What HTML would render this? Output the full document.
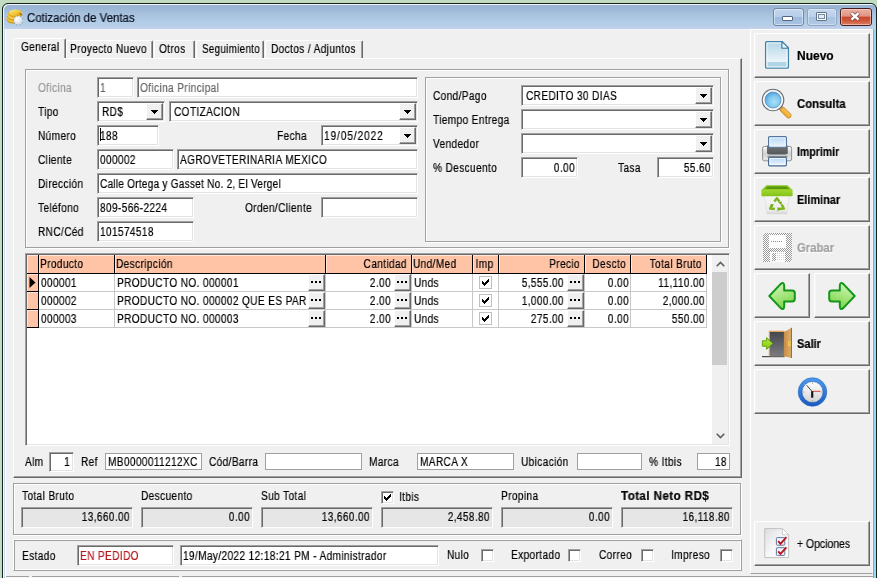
<!DOCTYPE html><html><head><meta charset="utf-8"><title>Cotización de Ventas</title><style>
html,body{margin:0;padding:0;}
body{width:877px;height:578px;overflow:hidden;background:#c1dcc1;position:relative;
 font-family:"Liberation Sans",sans-serif;font-size:12px;color:#000;}
div,span,i,b{box-sizing:border-box;}
.t,.s,.f>span,.bt{will-change:transform;-webkit-text-stroke:0.2px currentColor;}
.t,.s,.f>span{letter-spacing:.45px;}
.abs,.t,.f,.fr,.btn,.pn,.hd,.c,.eb,.ck,.gl{position:absolute;}
#win{position:absolute;left:2px;top:3px;width:875px;height:600px;border:1px solid #18211b;border-radius:6px 6px 0 0;
 background:linear-gradient(#97b3d2 1px,#9fbad8 6px,#a9c3df 11px,#afcae5 16px,#b2cee8 20px,#bccfe9 23px,#c3d3eb 25px,#c3d3eb 100%);
 box-shadow:inset 1px 1px 0 #f4f8fc;}
#client{position:absolute;left:5px;top:29px;width:868px;height:560px;background:#f0f0f0;}
.t{white-space:nowrap;line-height:13px;height:13px;transform:scaleX(.84);transform-origin:0 0;}
.dis{color:#989898;}
.dis2{color:#666;}
.f{background:#fff;border:1px solid;border-color:#a0a0a0 #fff #fff #a0a0a0;
 box-shadow:inset 1px 1px 0 #696969, inset -1px -1px 0 #e3e3e3;overflow:hidden;}
.f>span{position:absolute;left:2px;right:2px;top:4px;line-height:13px;height:13px;white-space:nowrap;display:block;transform:scaleX(.84);transform-origin:0 0;}
.f>span.r{transform-origin:100% 0;}
.s{display:block;transform:scaleX(.84);transform-origin:0 0;}
.s.ar{transform-origin:100% 0;text-align:right;}
.s.ac{transform-origin:50% 0;text-align:center;}
.f.g{background:#e6e6e6;}
.f.flat{border:1px solid #a0a0a0;box-shadow:none;}
.f.flat>span{top:2px;left:2px;right:2px;}
.f.g>span{top:3px;}
.cb{position:absolute;right:1px;top:1px;width:17px;background:#f0f0f0;border:1px solid;border-color:#fff #696969 #696969 #fff;
 box-shadow:inset -1px -1px 0 #a0a0a0, inset 1px 1px 0 #f0f0f0;display:block;}
.cb>svg{left:4px;top:6px;}
.fr{border:1px solid #a0a0a0;box-shadow:1px 1px 0 #fff, inset 1px 1px 0 #fff;}
.frb{position:absolute;border:1px solid;border-color:#fff #a0a0a0 #a0a0a0 #fff;box-shadow:inset 1px 1px 0 #a0a0a0, inset -1px -1px 0 #fff;}
.btn{background:#f0f0f0;border:1px solid;border-color:#fff #696969 #696969 #fff;
 box-shadow:inset -1px -1px 0 #a0a0a0, inset 1px 1px 0 #f4f4f4;}
.bt{position:absolute;font-weight:bold;font-size:12px;line-height:13px;height:13px;white-space:nowrap;transform-origin:0 0;}
.hd{background:#ffc3a5;border-top:1px solid #ffe6d9;border-left:1px solid #ffe6d9;line-height:13px;padding:2px 4px 0 0;white-space:nowrap;overflow:hidden;}
.c{background:#fff;line-height:13px;padding:3px 1px 0 2px;white-space:nowrap;overflow:hidden;}
.eb{background:#f0f0f0;border:1px solid;border-color:#fff #696969 #696969 #fff;box-shadow:inset -1px -1px 0 #a0a0a0;}
.eb:before{content:"";position:absolute;left:2px;top:6px;width:2px;height:2px;background:#000;box-shadow:4px 0 0 #000,8px 0 0 #000;}
.ck{width:13px;height:13px;background:#fff;border:1px solid #c0c0c0;}
.ck3{width:13px;height:13px;background:#fff;border:1px solid;border-color:#a0a0a0 #fff #fff #a0a0a0;box-shadow:inset 1px 1px 0 #696969, inset -1px -1px 0 #e3e3e3;position:absolute;}
.gl{background:#c0c0c0;}
svg{position:absolute;overflow:visible;}
</style></head><body>
<div id="win"></div>
<svg style="left:6px;top:9px" width="17" height="17" viewBox="0 0 17 17">
<defs><linearGradient id="gold" x1="0" y1="0" x2="1" y2="1"><stop offset="0" stop-color="#fbeb9a"/><stop offset="0.5" stop-color="#f2c83c"/><stop offset="1" stop-color="#d59a1a"/></linearGradient>
<radialGradient id="silv" cx="0.4" cy="0.35" r="0.75"><stop offset="0" stop-color="#ffffff"/><stop offset="1" stop-color="#cdd3d8"/></radialGradient></defs>
<ellipse cx="7.600" cy="10.600" rx="7" ry="4" fill="#cf961a"/>
<ellipse cx="7.800" cy="9.300" rx="7.200" ry="4" fill="#f0c23a"/>
<ellipse cx="8.300" cy="7.600" rx="7.300" ry="4" fill="#d9a224"/>
<ellipse cx="8.700" cy="6.300" rx="7.300" ry="4" fill="#f3cb48"/>
<ellipse cx="9.300" cy="4.800" rx="7" ry="3.800" fill="#dca726"/>
<ellipse cx="9.600" cy="3.800" rx="6.600" ry="3.400" fill="url(#gold)"/>
<path d="M13.500 4.600 Q15.800 5.200 16 6.400" stroke="#6b4a12" stroke-width="0.900" fill="none"/>
<circle cx="12.200" cy="11.400" r="4.500" fill="url(#silv)"/>
<circle cx="12.200" cy="11.400" r="4.600" fill="none" stroke="#6d7c90" stroke-width="0.900" stroke-dasharray="0.900 2.100" stroke-dashoffset="1"/>
</svg>
<div class="t" style="left:27px;top:11px;font-size:12px;line-height:15px;height:15px;color:#0a0f1e;transform:scaleX(.955);letter-spacing:0;">Cotización de Ventas</div>
<div class="abs" style="left:773px;top:8px;width:31px;height:18px;border:1px solid #6f88a8;border-radius:3px;background:linear-gradient(#c3d6ec 0,#b7cde8 48%,#9db9db 52%,#aac4e2 100%);box-shadow:inset 0 0 0 1px rgba(255,255,255,.45);">
<div class="abs" style="left:8px;top:7px;width:11px;height:5px;background:#fff;border:1px solid #55677f;border-radius:1px;"></div></div>
<div class="abs" style="left:807px;top:8px;width:30px;height:18px;border:1px solid #8fa6c3;border-radius:3px;background:linear-gradient(#c6d8ed 0,#bbd0e9 48%,#a9c2e0 52%,#b3cae5 100%);box-shadow:inset 0 0 0 1px rgba(255,255,255,.35);">
<div class="abs" style="left:8px;top:3px;width:11px;height:9px;background:#fbfcfe;border:1px solid #61728b;border-radius:1px;"><div class="abs" style="left:1px;top:1px;width:7px;height:5px;border:1px solid #7889a2;background:#e6ecf5"></div></div></div>
<div class="abs" style="left:840px;top:8px;width:32px;height:18px;border:1px solid #4b1f22;border-radius:3px;background:linear-gradient(#eab1a3 0,#e09584 45%,#c8472c 50%,#cf5a3d 75%,#dc8068 100%);box-shadow:inset 0 0 0 1px rgba(255,220,210,.55);">
<svg style="left:8px;top:3px" width="13" height="10" viewBox="0 0 13 10"><path d="M2.300 1 L9.700 7.800 M9.700 1 L2.300 7.800" stroke="#7a4a48" stroke-width="3.800" stroke-linecap="butt" fill="none"/><path d="M2.500 1.200 L9.500 7.600 M9.500 1.200 L2.500 7.600" stroke="#fff" stroke-width="2.500" stroke-linecap="butt" fill="none"/></svg></div>
<div class="abs" style="left:4px;top:29px;width:1px;height:549px;background:#c6dcf0"></div>
<div class="abs" style="left:873px;top:29px;width:1px;height:549px;background:#8aa7b8"></div>
<div class="abs" style="left:874px;top:29px;width:2px;height:549px;background:#97daf5"></div>
<div id="client"></div>
<div class="abs" style="left:872px;top:29px;width:1px;height:549px;background:#f7f5f5"></div>
<div class="abs" style="left:5px;top:29px;width:868px;height:1px;background:#f1f5fb"></div>
<div class="abs" style="left:5px;top:29px;width:1px;height:549px;background:#fff"></div>
<div class="abs" style="left:13px;top:58px;width:729px;height:420px;border:1px solid;border-color:#fff #696969 #696969 #fff;box-shadow:inset -1px -1px 0 #a0a0a0;"></div>
<div class="abs" style="left:66px;top:40px;width:87px;height:18px;border:1px solid;border-color:#fff #696969 transparent #fff;border-bottom:none;box-shadow:inset -1px 0 0 #a0a0a0;border-radius:2px 2px 0 0;"></div>
<div class="t " style="left:70px;top:43px;">Proyecto Nuevo</div>
<div class="abs" style="left:154px;top:40px;width:41px;height:18px;border:1px solid;border-color:#fff #696969 transparent #fff;border-bottom:none;box-shadow:inset -1px 0 0 #a0a0a0;border-radius:2px 2px 0 0;"></div>
<div class="t " style="left:159px;top:43px;">Otros</div>
<div class="abs" style="left:196px;top:40px;width:68px;height:18px;border:1px solid;border-color:#fff #696969 transparent #fff;border-bottom:none;box-shadow:inset -1px 0 0 #a0a0a0;border-radius:2px 2px 0 0;"></div>
<div class="t " style="left:202px;top:43px;transform:scaleX(.81);">Seguimiento</div>
<div class="abs" style="left:265px;top:40px;width:98px;height:18px;border:1px solid;border-color:#fff #696969 transparent #fff;border-bottom:none;box-shadow:inset -1px 0 0 #a0a0a0;border-radius:2px 2px 0 0;"></div>
<div class="t " style="left:271px;top:43px;">Doctos / Adjuntos</div>
<div class="abs" style="left:13px;top:38px;width:53px;height:20px;background:#f0f0f0;border:1px solid;border-color:#fff #696969 transparent #fff;border-bottom:none;box-shadow:inset -1px 0 0 #a0a0a0;border-radius:2px 2px 0 0;"></div>
<div class="abs" style="left:14px;top:58px;width:50px;height:1px;background:#f0f0f0;"></div>
<div class="t " style="left:21px;top:41px;">General</div>
<div class="fr" style="left:25px;top:69px;width:704px;height:179px;"></div>
<div class="fr" style="left:425px;top:77px;width:296px;height:165px;"></div>
<div class="t dis" style="left:38px;top:82px;">Oficina</div>
<div class="t " style="left:38px;top:106px;">Tipo</div>
<div class="t " style="left:38px;top:130px;">Número</div>
<div class="t " style="left:38px;top:154px;">Cliente</div>
<div class="t " style="left:38px;top:178px;">Dirección</div>
<div class="t " style="left:38px;top:202px;">Teléfono</div>
<div class="t " style="left:38px;top:226px;">RNC/Céd</div>
<div class="t " style="left:277px;top:130px;">Fecha</div>
<div class="t " style="left:245px;top:202px;">Orden/Cliente</div>
<div class="f dis2" style="left:97px;top:77px;width:37px;height:21px;"><span class="" style="text-align:left;">1</span></div>
<div class="f dis2" style="left:137px;top:77px;width:281px;height:21px;"><span class="" style="text-align:left;">Oficina Principal</span></div>
<div class="f" style="left:97px;top:101px;width:68px;height:21px;"><span style="left:4px;">RD$</span><i class="cb" style="height:17px"><svg width="7" height="4" viewBox="0 0 7 4" shape-rendering="crispEdges"><path d="M0 0h7v1h-1v1h-1v1h-1v1h-1v-1h-1v-1h-1v-1h-1z" fill="#000"/></svg></i></div>
<div class="f" style="left:169px;top:101px;width:249px;height:21px;"><span style="left:4px;">COTIZACION</span><i class="cb" style="height:17px"><svg width="7" height="4" viewBox="0 0 7 4" shape-rendering="crispEdges"><path d="M0 0h7v1h-1v1h-1v1h-1v1h-1v-1h-1v-1h-1v-1h-1z" fill="#000"/></svg></i></div>
<div class="f " style="left:97px;top:125px;width:62px;height:21px;"><span class="" style="text-align:left;">188</span></div>
<div class="abs" style="left:100px;top:128px;width:1px;height:13px;background:#000"></div>
<div class="f" style="left:321px;top:125px;width:97px;height:21px;"><span style="left:4px;left:2px;letter-spacing:1.1px;">19/05/2022</span><i class="cb" style="height:17px"><svg width="7" height="4" viewBox="0 0 7 4" shape-rendering="crispEdges"><path d="M0 0h7v1h-1v1h-1v1h-1v1h-1v-1h-1v-1h-1v-1h-1z" fill="#000"/></svg></i></div>
<div class="f " style="left:97px;top:149px;width:77px;height:21px;"><span class="" style="text-align:left;">000002</span></div>
<div class="f " style="left:177px;top:149px;width:241px;height:21px;"><span class="" style="text-align:left;">AGROVETERINARIA MEXICO</span></div>
<div class="f " style="left:97px;top:173px;width:321px;height:21px;"><span class="" style="text-align:left;letter-spacing:.28px;">Calle Ortega y Gasset No. 2, El Vergel</span></div>
<div class="f " style="left:97px;top:197px;width:97px;height:21px;"><span class="" style="text-align:left;">809-566-2224</span></div>
<div class="f " style="left:321px;top:197px;width:97px;height:21px;"><span class="" style="text-align:left;"></span></div>
<div class="f " style="left:97px;top:221px;width:97px;height:21px;"><span class="" style="text-align:left;">101574518</span></div>
<div class="t " style="left:433px;top:90px;">Cond/Pago</div>
<div class="t " style="left:433px;top:114px;">Tiempo Entrega</div>
<div class="t " style="left:433px;top:138px;">Vendedor</div>
<div class="t " style="left:433px;top:162px;">% Descuento</div>
<div class="t " style="left:618px;top:162px;">Tasa</div>
<div class="f" style="left:521px;top:85px;width:193px;height:21px;"><span style="left:4px;">CREDITO 30 DIAS</span><i class="cb" style="height:17px"><svg width="7" height="4" viewBox="0 0 7 4" shape-rendering="crispEdges"><path d="M0 0h7v1h-1v1h-1v1h-1v1h-1v-1h-1v-1h-1v-1h-1z" fill="#000"/></svg></i></div>
<div class="f" style="left:521px;top:109px;width:193px;height:21px;"><span style="left:4px;"></span><i class="cb" style="height:17px"><svg width="7" height="4" viewBox="0 0 7 4" shape-rendering="crispEdges"><path d="M0 0h7v1h-1v1h-1v1h-1v1h-1v-1h-1v-1h-1v-1h-1z" fill="#000"/></svg></i></div>
<div class="f" style="left:521px;top:133px;width:193px;height:21px;"><span style="left:4px;"></span><i class="cb" style="height:17px"><svg width="7" height="4" viewBox="0 0 7 4" shape-rendering="crispEdges"><path d="M0 0h7v1h-1v1h-1v1h-1v1h-1v-1h-1v-1h-1v-1h-1z" fill="#000"/></svg></i></div>
<div class="f " style="left:521px;top:157px;width:57px;height:21px;"><span class="r" style="text-align:right;">0.00</span></div>
<div class="f " style="left:657px;top:157px;width:57px;height:21px;"><span class="r" style="text-align:right;">55.60</span></div>
<div class="abs" style="left:25px;top:253px;width:705px;height:193px;background:#fff;border:1px solid;border-color:#a0a0a0 #fff #fff #a0a0a0;box-shadow:inset 1px 1px 0 #696969, inset -1px -1px 0 #e3e3e3;"></div>
<div class="abs" style="left:27px;top:255px;width:680px;height:19px;background:#000;"></div>
<div class="hd" style="left:27px;top:255px;width:11px;height:18px;"><span class="s al"></span></div>
<div class="hd" style="left:39px;top:255px;width:75px;height:18px;"><span class="s al">Producto</span></div>
<div class="hd" style="left:115px;top:255px;width:210px;height:18px;"><span class="s al">Descripción</span></div>
<div class="hd" style="left:326px;top:255px;width:85px;height:18px;"><span class="s ar">Cantidad</span></div>
<div class="hd" style="left:412px;top:255px;width:60px;height:18px;"><span class="s al">Und/Med</span></div>
<div class="hd" style="left:473px;top:255px;width:25px;height:18px;"><span class="s ac">Imp</span></div>
<div class="hd" style="left:499px;top:255px;width:85px;height:18px;"><span class="s ar">Precio</span></div>
<div class="hd" style="left:585px;top:255px;width:45px;height:18px;"><span class="s ar">Descto</span></div>
<div class="hd" style="left:631px;top:255px;width:75px;height:18px;"><span class="s ar">Total Bruto</span></div>
<div class="abs" style="left:27px;top:274px;width:680px;height:54px;background:#c8c8c8;"></div>
<div class="abs" style="left:27px;top:274px;width:12px;height:54px;background:#000;"></div>
<div class="abs" style="left:27px;top:274px;width:11px;height:17px;background:#ffc3a5;border-top:1px solid #ffe6d9;border-left:1px solid #ffe6d9;"></div>
<div class="c" style="left:39px;top:274px;width:75px;height:17px;"><span class="s al">000001</span></div>
<div class="c" style="left:115px;top:274px;width:210px;height:17px;"><span class="s al">PRODUCTO NO. 000001</span></div>
<div class="c" style="left:326px;top:274px;width:85px;height:17px;padding-right:20px;"><span class="s ar">2.00</span></div>
<div class="c" style="left:412px;top:274px;width:60px;height:17px;"><span class="s al">Unds</span></div>
<div class="c" style="left:473px;top:274px;width:25px;height:17px;"></div>
<div class="c" style="left:499px;top:274px;width:85px;height:17px;padding-right:20px;"><span class="s ar">5,555.00</span></div>
<div class="c" style="left:585px;top:274px;width:45px;height:17px;"><span class="s ar">0.00</span></div>
<div class="c" style="left:631px;top:274px;width:75px;height:17px;"><span class="s ar">11,110.00</span></div>
<div class="eb" style="left:308px;top:274px;width:17px;height:17px;"></div>
<div class="eb" style="left:394px;top:274px;width:17px;height:17px;"></div>
<div class="eb" style="left:567px;top:274px;width:17px;height:17px;"></div>
<div class="ck" style="left:479px;top:276px;"><svg style="left:2px;top:2px" width="7" height="7" viewBox="0 0 7 7" shape-rendering="crispEdges"><path d="M0 2h1v1h1v1h1v-1h1v-1h1v-1h1v-1h1v3h-1v1h-1v1h-1v1h-1v1h-1v-1h-1v-1h-1z" fill="#000"/></svg></div>
<div class="abs" style="left:27px;top:292px;width:11px;height:17px;background:#ffc3a5;border-top:1px solid #ffe6d9;border-left:1px solid #ffe6d9;"></div>
<div class="c" style="left:39px;top:292px;width:75px;height:17px;"><span class="s al">000002</span></div>
<div class="c" style="left:115px;top:292px;width:210px;height:17px;"><span class="s al">PRODUCTO NO. 000002 QUE ES PAR</span></div>
<div class="c" style="left:326px;top:292px;width:85px;height:17px;padding-right:20px;"><span class="s ar">2.00</span></div>
<div class="c" style="left:412px;top:292px;width:60px;height:17px;"><span class="s al">Unds</span></div>
<div class="c" style="left:473px;top:292px;width:25px;height:17px;"></div>
<div class="c" style="left:499px;top:292px;width:85px;height:17px;padding-right:20px;"><span class="s ar">1,000.00</span></div>
<div class="c" style="left:585px;top:292px;width:45px;height:17px;"><span class="s ar">0.00</span></div>
<div class="c" style="left:631px;top:292px;width:75px;height:17px;"><span class="s ar">2,000.00</span></div>
<div class="eb" style="left:308px;top:292px;width:17px;height:17px;"></div>
<div class="eb" style="left:394px;top:292px;width:17px;height:17px;"></div>
<div class="eb" style="left:567px;top:292px;width:17px;height:17px;"></div>
<div class="ck" style="left:479px;top:294px;"><svg style="left:2px;top:2px" width="7" height="7" viewBox="0 0 7 7" shape-rendering="crispEdges"><path d="M0 2h1v1h1v1h1v-1h1v-1h1v-1h1v-1h1v3h-1v1h-1v1h-1v1h-1v1h-1v-1h-1v-1h-1z" fill="#000"/></svg></div>
<div class="abs" style="left:27px;top:310px;width:11px;height:17px;background:#ffc3a5;border-top:1px solid #ffe6d9;border-left:1px solid #ffe6d9;"></div>
<div class="c" style="left:39px;top:310px;width:75px;height:17px;"><span class="s al">000003</span></div>
<div class="c" style="left:115px;top:310px;width:210px;height:17px;"><span class="s al">PRODUCTO NO. 000003</span></div>
<div class="c" style="left:326px;top:310px;width:85px;height:17px;padding-right:20px;"><span class="s ar">2.00</span></div>
<div class="c" style="left:412px;top:310px;width:60px;height:17px;"><span class="s al">Unds</span></div>
<div class="c" style="left:473px;top:310px;width:25px;height:17px;"></div>
<div class="c" style="left:499px;top:310px;width:85px;height:17px;padding-right:20px;"><span class="s ar">275.00</span></div>
<div class="c" style="left:585px;top:310px;width:45px;height:17px;"><span class="s ar">0.00</span></div>
<div class="c" style="left:631px;top:310px;width:75px;height:17px;"><span class="s ar">550.00</span></div>
<div class="eb" style="left:308px;top:310px;width:17px;height:17px;"></div>
<div class="eb" style="left:394px;top:310px;width:17px;height:17px;"></div>
<div class="eb" style="left:567px;top:310px;width:17px;height:17px;"></div>
<div class="ck" style="left:479px;top:312px;"><svg style="left:2px;top:2px" width="7" height="7" viewBox="0 0 7 7" shape-rendering="crispEdges"><path d="M0 2h1v1h1v1h1v-1h1v-1h1v-1h1v-1h1v3h-1v1h-1v1h-1v1h-1v1h-1v-1h-1v-1h-1z" fill="#000"/></svg></div>
<svg style="left:29px;top:277px" width="7" height="11" viewBox="0 0 7 11"><path d="M0.500 0 L6.500 5.500 L0.500 11 Z" fill="#000"/></svg>
<div class="abs" style="left:712px;top:255px;width:16px;height:189px;background:#f0f0f0;"></div>
<div class="abs" style="left:712px;top:272px;width:15px;height:93px;background:#cdcdcd;"></div>
<svg style="left:715.500px;top:261px" width="9" height="6" viewBox="0 0 9 6"><path d="M0.7 5.2 L4.5 1.4 L8.3 5.2" fill="none" stroke="#606060" stroke-width="1.6"/></svg>
<svg style="left:715.500px;top:433px" width="9" height="6" viewBox="0 0 9 6"><path d="M0.7 0.8 L4.5 4.6 L8.3 0.8" fill="none" stroke="#606060" stroke-width="1.6"/></svg>
<div class="t " style="left:25px;top:456px;">Alm</div>
<div class="f " style="left:49px;top:452px;width:25px;height:20px;"><span class="r" style="text-align:right;right:3px;top:3px;">1</span></div>
<div class="t " style="left:81px;top:456px;">Ref</div>
<div class="f flat" style="left:105px;top:453px;width:97px;height:17px;"><span class="" style="text-align:left;">MB0000011212XC</span></div>
<div class="t " style="left:209px;top:456px;">Cód/Barra</div>
<div class="f flat" style="left:265px;top:453px;width:97px;height:17px;"><span class="" style="text-align:left;"></span></div>
<div class="t " style="left:369px;top:456px;">Marca</div>
<div class="f flat" style="left:417px;top:453px;width:97px;height:17px;"><span class="" style="text-align:left;">MARCA X</span></div>
<div class="t " style="left:521px;top:456px;">Ubicación</div>
<div class="f flat" style="left:577px;top:453px;width:65px;height:17px;"><span class="" style="text-align:left;"></span></div>
<div class="t " style="left:649px;top:456px;">% Itbis</div>
<div class="f flat" style="left:697px;top:453px;width:33px;height:17px;"><span class="r" style="text-align:right;">18</span></div>
<div class="fr" style="left:13px;top:483px;width:728px;height:52px;"></div>
<div class="t " style="left:22px;top:490px;">Total Bruto</div>
<div class="t " style="left:141px;top:490px;">Descuento</div>
<div class="t " style="left:261px;top:490px;">Sub Total</div>
<div class="t " style="left:399px;top:491px;">Itbis</div>
<div class="t " style="left:501px;top:490px;">Propina</div>
<div class="t " style="left:621px;top:490px;font-weight:bold;transform:scaleX(.965);">Total Neto RD$</div>
<div class="f g" style="left:21px;top:507px;width:112px;height:21px;"><span class="r" style="text-align:right;">13,660.00</span></div>
<div class="f g" style="left:141px;top:507px;width:112px;height:21px;"><span class="r" style="text-align:right;">0.00</span></div>
<div class="f g" style="left:261px;top:507px;width:112px;height:21px;"><span class="r" style="text-align:right;">13,660.00</span></div>
<div class="f g" style="left:381px;top:507px;width:112px;height:21px;"><span class="r" style="text-align:right;">2,458.80</span></div>
<div class="f g" style="left:501px;top:507px;width:112px;height:21px;"><span class="r" style="text-align:right;">0.00</span></div>
<div class="f g" style="left:621px;top:507px;width:112px;height:21px;"><span class="r" style="text-align:right;">16,118.80</span></div>
<div class="ck3" style="left:381px;top:491px;"><svg style="left:2px;top:2px" width="7" height="7" viewBox="0 0 7 7" shape-rendering="crispEdges"><path d="M0 2h1v1h1v1h1v-1h1v-1h1v-1h1v-1h1v3h-1v1h-1v1h-1v1h-1v1h-1v-1h-1v-1h-1z" fill="#000"/></svg></div>
<div class="frb" style="left:13px;top:539px;width:729px;height:32px;"></div>
<div class="t " style="left:22px;top:550px;">Estado</div>
<div class="f " style="left:77px;top:545px;width:97px;height:21px;"><span class="" style="text-align:left;color:#b8141a;">EN PEDIDO</span></div>
<div class="f " style="left:180px;top:545px;width:259px;height:21px;"><span class="" style="text-align:left;">19/May/2022 12:18:21 PM - Administrador</span></div>
<div class="t " style="left:447px;top:549px;">Nulo</div>
<div class="ck3" style="left:481px;top:549px;"></div>
<div class="t " style="left:511px;top:549px;">Exportado</div>
<div class="ck3" style="left:568px;top:549px;"></div>
<div class="t " style="left:599px;top:549px;">Correo</div>
<div class="ck3" style="left:641px;top:549px;"></div>
<div class="t " style="left:671px;top:549px;">Impreso</div>
<div class="ck3" style="left:720px;top:549px;"></div>
<div class="abs" style="left:6px;top:576px;width:23px;height:1px;background:#a0a0a0;"></div>
<div class="abs" style="left:32px;top:576px;width:147px;height:1px;background:#a0a0a0;"></div>
<div class="abs" style="left:182px;top:576px;width:691px;height:1px;background:#a0a0a0;"></div>
<div class="abs" style="left:6px;top:577px;width:867px;height:1px;background:#f8f8f8;"></div>
<div class="abs" style="left:750px;top:29px;width:123px;height:545px;border:1px solid;border-color:#fff transparent #a0a0a0 #fff;"></div>
<div class="btn" style="left:754px;top:33px;width:116px;height:45px;"></div>
<svg style="left:764px;top:40px" width="26" height="30" viewBox="0 0 26 30"><defs><linearGradient id="pg" x1="0" y1="0" x2="0" y2="1"><stop offset="0" stop-color="#b3d5e7"/><stop offset="0.72" stop-color="#e9f3f9"/><stop offset="1" stop-color="#e3f0f7"/></linearGradient></defs>
<path d="M2.800 1.600 H18.300 L24.400 7.700 V27 Q24.400 28.200 23.200 28.200 H2.800 Q1.600 28.200 1.600 27 V2.800 Q1.600 1.600 2.800 1.600 Z" fill="url(#pg)" stroke="#4383a8" stroke-width="1.300"/>
<path d="M3 3 H17.400 V8.600 H23 V26.800 H3 Z" fill="none" stroke="#f3f9fc" stroke-width="0.900"/>
<rect x="3.600" y="22" width="18.800" height="4.400" fill="#b1d4e6"/>
<path d="M17.900 1.900 V8.200 H24.100" fill="none" stroke="#3b789e" stroke-width="1.300"/>
<path d="M18.700 3.400 L22.800 7.500 H18.700 Z" fill="#f1f8fc"/></svg>
<div class="bt" style="left:797px;top:50px;transform:scaleX(1.0);">Nuevo</div>
<div class="btn" style="left:754px;top:81px;width:116px;height:45px;"></div>
<svg style="left:760px;top:87px" width="34" height="34" viewBox="0 0 34 34"><defs><radialGradient id="lens" cx="0.58" cy="0.62" r="0.7"><stop offset="0" stop-color="#a9e1f7"/><stop offset="0.55" stop-color="#7cc6ee"/><stop offset="1" stop-color="#3b93d8"/></radialGradient>
<linearGradient id="hnd" x1="0" y1="1" x2="1" y2="0"><stop offset="0" stop-color="#e79a1c"/><stop offset="1" stop-color="#fbd06a"/></linearGradient></defs>
<path d="M20.500 20.500 L24 24" stroke="#9aa3ab" stroke-width="4.600" stroke-linecap="butt"/>
<path d="M23 23 L28.600 28.600" stroke="#d08a1e" stroke-width="5.600" stroke-linecap="round"/>
<path d="M23 23 L28.600 28.600" stroke="url(#hnd)" stroke-width="4.200" stroke-linecap="round"/>
<circle cx="13" cy="13" r="10.800" fill="#f6f8f9" stroke="#6c7074" stroke-width="1.100"/>
<circle cx="13" cy="13" r="8" fill="url(#lens)" stroke="#5c8fb8" stroke-width="0.800"/></svg>
<div class="bt" style="left:797px;top:98px;transform:scaleX(0.945);">Consulta</div>
<div class="btn" style="left:754px;top:129px;width:116px;height:45px;"></div>
<svg style="left:761px;top:135px" width="32" height="32" viewBox="0 0 32 32"><defs><linearGradient id="pap" x1="0" y1="0" x2="0" y2="1"><stop offset="0" stop-color="#b4d5f7"/><stop offset="1" stop-color="#eef6fe"/></linearGradient>
<linearGradient id="pbody" x1="0" y1="0" x2="0" y2="1"><stop offset="0" stop-color="#fbfbfb"/><stop offset="0.5" stop-color="#d0d1d2"/><stop offset="1" stop-color="#ececec"/></linearGradient>
<linearGradient id="pband" x1="0" y1="0" x2="0" y2="1"><stop offset="0" stop-color="#8a8d90"/><stop offset="0.35" stop-color="#6a6d70"/><stop offset="1" stop-color="#55585b"/></linearGradient></defs>
<rect x="1.600" y="11.400" width="29" height="14.400" rx="1.800" fill="url(#pbody)" stroke="#8f9193" stroke-width="1"/>
<rect x="6" y="9.400" width="20.800" height="10" rx="2.200" fill="url(#pband)"/>
<rect x="7.600" y="1.600" width="17.800" height="10.600" rx="1" fill="url(#pap)" stroke="#55779f" stroke-width="1.200"/>
<rect x="8.900" y="2.900" width="15.200" height="8.200" fill="none" stroke="#fafdff" stroke-width="0.800"/>
<rect x="7.600" y="22.400" width="17.800" height="8.400" rx="1" fill="url(#pap)" stroke="#47698f" stroke-width="1.200"/>
<rect x="8.900" y="23.600" width="15.200" height="6" fill="none" stroke="#fafdff" stroke-width="0.800"/>
<rect x="6.500" y="20.800" width="20" height="1.400" fill="#85888b"/></svg>
<div class="bt" style="left:797px;top:146px;transform:scaleX(0.88);">Imprimir</div>
<div class="btn" style="left:754px;top:177px;width:116px;height:45px;"></div>
<svg style="left:761px;top:185px" width="32" height="30" viewBox="0 0 32 30"><defs><linearGradient id="can" x1="0" y1="0" x2="0" y2="1"><stop offset="0" stop-color="#f6f6f6"/><stop offset="0.8" stop-color="#ececec"/><stop offset="1" stop-color="#d4d4d4"/></linearGradient>
<linearGradient id="lid" x1="0" y1="0" x2="0" y2="1"><stop offset="0" stop-color="#a0d930"/><stop offset="1" stop-color="#84c21b"/></linearGradient></defs>
<path d="M3.400 10.500 H28.200 L26 29 H6 Z" fill="url(#can)" stroke="#dcdcdc" stroke-width="0.600"/>
<path d="M5.600 0.300 H26.400 L31.400 4.900 H0.600 Z" fill="#86c41c"/>
<path d="M6.600 1.500 H25.400 L27.800 3.900 H4.200 Z" fill="#5c9710"/>
<rect x="0.400" y="4.600" width="31.200" height="6.600" rx="1" fill="url(#lid)"/>
<g fill="none" stroke="#7db71d" stroke-width="2.500" stroke-linejoin="round">
<path d="M13.400 16.600 L15.900 13.300 L18.600 16.800"/><path d="M20.700 19.500 L22.800 23.600 L18 24"/><path d="M13.800 24 L9.200 23.600 L11.200 19.600"/></g>
<path d="M17.300 17.600 l3.600 -1.200 l-0.500 3.700 Z M16.600 21.800 l2.400 2.400 l-2.500 2.200 Z M9.200 19.800 l3.600 -0.700 l-1.700 3.200 Z" fill="#6aa514"/></svg>
<div class="bt" style="left:797px;top:194px;transform:scaleX(0.91);">Eliminar</div>
<div class="btn" style="left:754px;top:225px;width:116px;height:45px;"></div>
<svg style="left:763px;top:233px" width="29" height="29" viewBox="0 0 29 29"><defs><pattern id="dots" width="2" height="2" patternUnits="userSpaceOnUse"><rect width="2" height="2" fill="#fff"/><rect width="1" height="1" fill="#999"/><rect x="1" y="1" width="1" height="1" fill="#999"/></pattern>
<pattern id="dots2" width="2" height="2" patternUnits="userSpaceOnUse"><rect width="2" height="2" fill="#fff"/><rect width="1" height="1" fill="#8c8c8c"/></pattern></defs>
<g shape-rendering="crispEdges"><rect x="0" y="0" width="29" height="29" rx="2" fill="url(#dots)"/>
<rect x="6" y="2" width="17" height="13" fill="#fdfdfd"/>
<rect x="8" y="5" width="13" height="1" fill="url(#dots2)"/><rect x="7" y="8" width="13" height="1" fill="url(#dots2)"/><rect x="8" y="11" width="13" height="1" fill="url(#dots2)"/>
<rect x="7" y="19" width="15" height="10" fill="#fafafa"/><rect x="9" y="20" width="4" height="8" fill="url(#dots)"/><rect x="14" y="20" width="7" height="8" fill="url(#dots2)" opacity="0.35"/></g></svg>
<div class="bt" style="left:797px;top:242px;transform:scaleX(0.94);color:#a0a0a0;text-shadow:1px 1px 0 #fff;">Grabar</div>
<div class="btn" style="left:754px;top:273px;width:56px;height:45px;"></div>
<div class="btn" style="left:814px;top:273px;width:56px;height:45px;"></div>
<svg style="left:768px;top:282px" width="28" height="28" viewBox="0 0 28 28"><defs><linearGradient id="ag" x1="0.200" y1="0" x2="0.600" y2="1"><stop offset="0" stop-color="#d3f5bd"/><stop offset="0.55" stop-color="#a3e57a"/><stop offset="1" stop-color="#79d448"/></linearGradient></defs><path d="M1.300 14 L12.500 2.100 Q16 -0.600 16.200 3.800 V8.600 H24.200 Q26.800 8.600 26.800 11.200 V16.800 Q26.800 19.400 24.200 19.400 H16.200 V24.200 Q16 28.600 12.500 25.900 Z" fill="url(#ag)" stroke="#14961b" stroke-width="2" stroke-linejoin="round"/></svg>
<svg style="left:828px;top:282px" width="28" height="28" viewBox="0 0 28 28"><g transform="translate(28 0) scale(-1 1)"><path d="M1.300 14 L12.500 2.100 Q16 -0.600 16.200 3.800 V8.600 H24.200 Q26.800 8.600 26.800 11.200 V16.800 Q26.800 19.400 24.200 19.400 H16.200 V24.200 Q16 28.600 12.500 25.900 Z" fill="url(#ag)" stroke="#14961b" stroke-width="2" stroke-linejoin="round"/></g></svg>
<div class="btn" style="left:754px;top:321px;width:116px;height:45px;"></div>
<svg style="left:761px;top:327px" width="32" height="32" viewBox="0 0 32 32"><defs><linearGradient id="dk" x1="0" y1="0" x2="0" y2="1"><stop offset="0" stop-color="#45474d"/><stop offset="1" stop-color="#7a7c80"/></linearGradient>
<linearGradient id="wood" x1="0" y1="0" x2="1" y2="0"><stop offset="0" stop-color="#c88c46"/><stop offset="1" stop-color="#e3b06c"/></linearGradient>
<linearGradient id="ga" x1="0" y1="0" x2="0" y2="1"><stop offset="0" stop-color="#b4ea3a"/><stop offset="1" stop-color="#86c80e"/></linearGradient></defs>
<rect x="1" y="29" width="22.500" height="1.200" fill="#4d4d4d"/>
<rect x="7.800" y="3.700" width="15.700" height="25.500" fill="#dca660"/>
<rect x="8.900" y="5" width="14" height="24.200" fill="url(#dk)"/>
<path d="M23 5 L30.200 1 V31 L23 29.200 Z" fill="url(#wood)"/>
<path d="M30.400 0.800 V31" stroke="#6a5843" stroke-width="0.900"/>
<rect x="27.600" y="14.600" width="1.600" height="4" fill="none" stroke="#f6d455" stroke-width="0.800"/>
<path d="M1.300 13.800 H5.600 V10.600 L11.600 16.500 L5.600 22.400 V19.200 H1.300 Z" fill="url(#ga)" stroke="#64a30f" stroke-width="1"/></svg>
<div class="bt" style="left:797px;top:338px;transform:scaleX(0.92);">Salir</div>
<div class="btn" style="left:754px;top:369px;width:116px;height:45px;"></div>
<svg style="left:797px;top:377px" width="31" height="31" viewBox="0 0 31 31"><defs><linearGradient id="face" x1="0" y1="0" x2="0" y2="1"><stop offset="0" stop-color="#ffffff"/><stop offset="1" stop-color="#d2d2d2"/></linearGradient>
<linearGradient id="ring" x1="0" y1="0" x2="0" y2="1"><stop offset="0" stop-color="#4d9bee"/><stop offset="1" stop-color="#1959bd"/></linearGradient></defs>
<circle cx="15.500" cy="15" r="14.300" fill="url(#ring)" stroke="#2767c4" stroke-width="0.600"/>
<circle cx="15.500" cy="15" r="10.500" fill="url(#face)" stroke="#1d58b4" stroke-width="0.500"/>
<g stroke="#9a9a9a" stroke-width="0.800"><path d="M15.500 5.300 v1.600 M15.500 23.100 v1.600 M5.800 15 h1.600 M23.600 15 h1.600"/></g>
<path d="M15.300 14.600 L9.600 8.300" stroke="#3a3030" stroke-width="0.900"/>
<path d="M15.300 14.300 H23.400" stroke="#e0302c" stroke-width="0.900"/>
<path d="M15.200 14.200 V20.700" stroke="#161616" stroke-width="2.200"/></svg>
<div class="btn" style="left:754px;top:521px;width:116px;height:45px;"></div>
<svg style="left:763px;top:527px" width="28" height="33" viewBox="0 0 28 33"><defs><linearGradient id="op" x1="0" y1="0" x2="1" y2="1"><stop offset="0" stop-color="#dddde0"/><stop offset="0.55" stop-color="#f8f8f9"/><stop offset="1" stop-color="#ffffff"/></linearGradient></defs>
<path d="M1.700 1.600 H19.600 L25.600 7.600 V30.600 H1.700 Z" fill="url(#op)" stroke="#c2c2c2" stroke-width="1"/>
<path d="M19.400 1.900 V7.800 H25.300" fill="#fdfdfd" stroke="#c6c6c6" stroke-width="0.900"/>
<rect x="13.400" y="10.600" width="8.400" height="7.600" rx="0.800" fill="#f3f4f8" stroke="#6475a0" stroke-width="1"/>
<rect x="13.400" y="20.700" width="8.400" height="7.700" rx="0.800" fill="#f3f4f8" stroke="#6475a0" stroke-width="1"/>
<path d="M15.200 14.200 L17.500 16.800 L23.400 10.200" fill="none" stroke="#b8151c" stroke-width="1.900"/>
<path d="M15.200 24.300 L17.500 26.900 L23.400 20.300" fill="none" stroke="#b8151c" stroke-width="1.900"/></svg>
<div class="bt" style="left:797px;top:538px;transform:scaleX(0.87);font-weight:normal;">+ Opciones</div>
</body></html>
